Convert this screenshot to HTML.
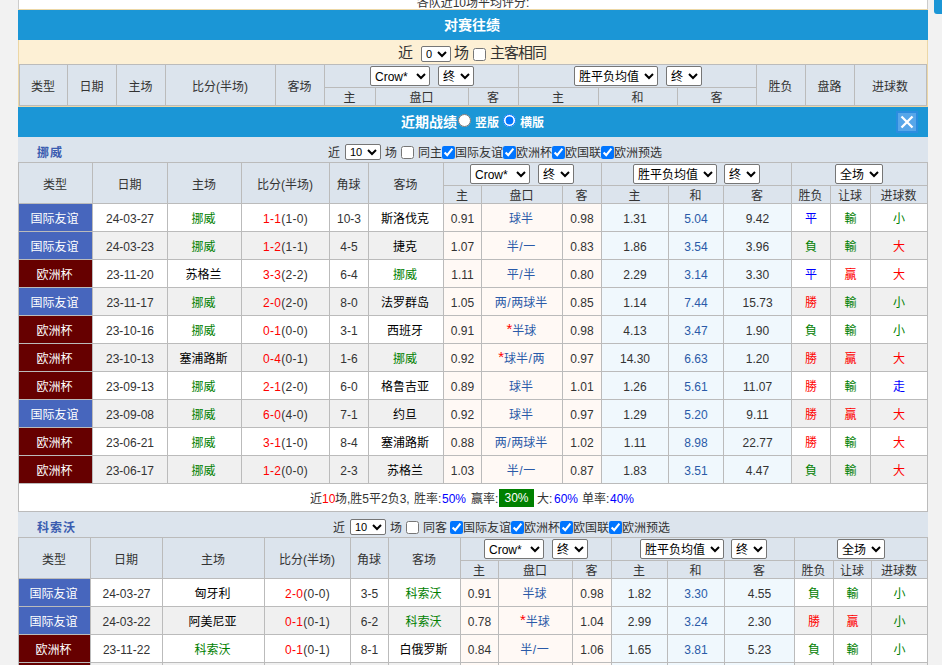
<!DOCTYPE html>
<html lang="zh-CN"><head><meta charset="utf-8"><title>近期战绩</title>
<style>
*{box-sizing:border-box}
html,body{margin:0;padding:0}
body{width:942px;height:665px;overflow:hidden;background:#f2f2f2;font-family:"Liberation Sans","Noto Sans CJK SC",sans-serif;font-size:12px;color:#333;position:relative}
.abs{position:absolute}
#top{left:18px;top:-20px;width:910px;height:29px;background:#fff;border-left:1px solid #ccc;border-right:1px solid #ccc;text-align:center;font-size:12px;line-height:16px;padding-top:15px;color:#333}
.bar{left:18px;width:910px;height:30px;background:#1b96d6;color:#fff;font-weight:bold;font-size:14px}
.bar .t{position:absolute;white-space:nowrap;line-height:16px;height:16px}
#cream{left:18px;top:9px;width:910px;height:98px;background:#fdf0d5;border:1px solid #ecd7a6}
.flow{position:absolute;left:0;top:0;width:0;height:0}
.flow span,.flow select,.flow input{position:absolute;white-space:nowrap}
.flow span{line-height:16px;height:16px}
table{border-collapse:separate;border-spacing:0;table-layout:fixed;position:absolute;border-left:1px solid #bbb;border-top:1px solid #bbb}
td,th{border-right:1px solid #bbb;border-bottom:1px solid #bbb;padding:0;line-height:16px;text-align:center;font-weight:normal;overflow:hidden;white-space:nowrap;vertical-align:middle}
th{background:#dce4ed;color:#333;position:relative;padding-right:1px}
td{padding-top:2px}
th[rowspan]{padding-top:4px}
tr.sb th{padding-top:0}
tr.sb th i{font-style:normal;position:relative;top:1px}
td.c{padding-right:2px}
th select{position:absolute;top:1px}
tr.a td{background:#fff}
tr.b td{background:#f0f0f0}
tr.a td.p,tr.b td.p{background:#fff9f5}
tr.a td.q,tr.b td.q{background:#f0f8fd}
td.fr{background:#4766bd !important;color:#fff}
td.eu{background:#660000 !important;color:#fff}
.g{color:#008000}.r{color:#ff0000}.bl{color:#0000ff}.k{color:#000}
.pk{color:#2a5aa8}
.st{font-size:15px;line-height:0;position:relative;top:-1px;margin-left:.7px}
.sl{margin:0 .5px}
.sc{letter-spacing:.3px}
.dr{color:#2a5aa8}
.team{left:18px;width:910px;height:25px;background:#dce4ed}
.team b{position:absolute;left:19px;top:8px;line-height:16px;color:#3a5cb0;font-size:12px;letter-spacing:1px;white-space:nowrap}
select{font-family:"Liberation Sans","Noto Sans CJK SC",sans-serif;font-size:12px;height:20px;padding:2px 0 0 0;margin:0;color:#000;background-color:#fff;border:1px solid #767676;border-radius:2px}
input{margin:0;width:13px;height:13px}
.sum{left:18px;top:484px;width:910px;height:28px;background:#fff;border:1px solid #bbb;border-top:0;text-align:center;line-height:27px;color:#333;white-space:nowrap}
.flow span.pct{background:#008000;color:#fff;width:35px;height:18px;line-height:18px;text-align:center}
#x{left:896px;top:111px;width:22px;height:22px;background:#57a6e9;border:2px solid #2b8de0}
#fl{left:934px;top:-6px;width:14px;height:20px;background:#1b96d6;border-radius:3px}
</style></head>
<body>
<div id="top" class="abs">各队近10场平均评分:</div>
<div id="cream" class="abs">
<div class="flow" style="font-size:15px"><span style="left:379px;top:35px">近</span><select style="left:402px;top:36px;width:30px;height:16px;padding:0;font-size:11px"><option>0</option></select><span style="left:435px;top:35px">场</span><input type="checkbox" style="left:454px;top:38px"><span style="left:471px;top:35px;letter-spacing:-1px">主客相同</span></div>
<table style="left:0;top:54px;width:908px"><colgroup><col style="width:48px"><col style="width:49px"><col style="width:49px"><col style="width:110px"><col style="width:49px"><col style="width:51px"><col style="width:93px"><col style="width:50px"><col style="width:80px"><col style="width:79px"><col style="width:79px"><col style="width:49px"><col style="width:49px"><col style="width:72px"></colgroup>
<tr style="height:23px"><th rowspan="2">类型</th><th rowspan="2">日期</th><th rowspan="2">主场</th><th rowspan="2">比分(半场)</th><th rowspan="2">客场</th>
<th colspan="3"><select style="left:45px;width:60px;"><option>Crow*</option></select><select style="left:113px;width:36px;"><option>终</option></select></th>
<th colspan="3"><select style="left:55px;width:84px;"><option>胜平负均值</option></select><select style="left:147px;width:36px;"><option>终</option></select></th>
<th rowspan="2">胜负</th><th rowspan="2">盘路</th><th rowspan="2">进球数</th></tr>
<tr class="sb" style="height:18px"><th><i>主</i></th><th><i>盘口</i></th><th><i>客</i></th><th><i>主</i></th><th><i>和</i></th><th><i>客</i></th></tr>
</table>
</div>
<div class="bar abs" style="top:10px"><span class="t" style="left:426px;top:7px">对赛往绩</span></div>
<div class="bar abs" style="top:107px"><div class="flow"><span style="left:383px;top:7px">近期战绩</span><input type="radio" style="left:440px;top:7px"><span style="left:457px;top:8px;font-size:12px">竖版</span><input type="radio" checked style="left:485px;top:7px"><span style="left:502px;top:8px;font-size:12px">横版</span></div></div>
<div id="x" class="abs"><svg width="18" height="18" viewBox="0 0 18 18" style="display:block"><path d="M3.5 3.5 L14.5 14.5 M14.5 3.5 L3.5 14.5" stroke="#fff" stroke-width="2.3" fill="none"/></svg></div>
<div class="team abs" style="top:137px"><b>挪威</b><div class="flow"><span style="left:310px;top:8px">近</span><select style="left:327px;top:7px;width:36px;height:16px;padding:0 0 1px 0;font-size:11px"><option>10</option></select><span style="left:367px;top:8px">场</span><input type="checkbox" style="left:383px;top:9px"><span style="left:400px;top:8px">同主</span><input type="checkbox" checked style="left:424px;top:9px"><span style="left:437px;top:8px">国际友谊</span><input type="checkbox" checked style="left:485px;top:9px"><span style="left:498px;top:8px">欧洲杯</span><input type="checkbox" checked style="left:534px;top:9px"><span style="left:547px;top:8px">欧国联</span><input type="checkbox" checked style="left:583px;top:9px"><span style="left:596px;top:8px">欧洲预选</span></div></div>
<table style="left:18px;top:162px;width:910px"><colgroup><col style="width:74px"><col style="width:75px"><col style="width:74px"><col style="width:88px"><col style="width:39px"><col style="width:75px"><col style="width:38px"><col style="width:81px"><col style="width:39px"><col style="width:67px"><col style="width:55px"><col style="width:68px"><col style="width:39px"><col style="width:40px"><col style="width:57px"></colgroup>
<tr style="height:23px"><th rowspan="2">类型</th><th rowspan="2">日期</th><th rowspan="2">主场</th><th rowspan="2">比分(半场)</th><th rowspan="2">角球</th><th rowspan="2">客场</th>
<th colspan="3"><select style="left:26px;width:60px;"><option>Crow*</option></select><select style="left:94px;width:36px;"><option>终</option></select></th>
<th colspan="3"><select style="left:31px;width:84px;"><option>胜平负均值</option></select><select style="left:122px;width:36px;"><option>终</option></select></th>
<th colspan="3"><select style="left:43px;width:48px;"><option>全场</option></select></th></tr>
<tr class="sb" style="height:18px"><th><i>主</i></th><th><i>盘口</i></th><th><i>客</i></th><th><i>主</i></th><th><i>和</i></th><th><i>客</i></th><th><i>胜负</i></th><th><i>让球</i></th><th><i>进球数</i></th></tr>
<tr class="a" style="height:28px"><td class="fr c">国际友谊</td><td>24-03-27</td><td class="g c">挪威</td><td class="sc"><span class="r">1-1</span>(1-0)</td><td>10-3</td><td class="k c">斯洛伐克</td><td class="p">0.91</td><td class="p pk c">球半</td><td class="p">0.98</td><td class="q">1.31</td><td class="q dr">5.04</td><td class="q">9.42</td><td class="bl">平</td><td class="g">輸</td><td class="g">小</td></tr><tr class="b" style="height:28px"><td class="fr c">国际友谊</td><td>24-03-23</td><td class="g c">挪威</td><td class="sc"><span class="r">1-2</span>(1-1)</td><td>4-5</td><td class="k c">捷克</td><td class="p">1.07</td><td class="p pk c">半<span class="sl">/</span>一</td><td class="p">0.83</td><td class="q">1.86</td><td class="q dr">3.54</td><td class="q">3.96</td><td class="g">負</td><td class="g">輸</td><td class="r">大</td></tr><tr class="a" style="height:28px"><td class="eu c">欧洲杯</td><td>23-11-20</td><td class="k c">苏格兰</td><td class="sc"><span class="r">3-3</span>(2-2)</td><td>6-4</td><td class="g c">挪威</td><td class="p">1.11</td><td class="p pk c">平<span class="sl">/</span>半</td><td class="p">0.80</td><td class="q">2.29</td><td class="q dr">3.14</td><td class="q">3.30</td><td class="bl">平</td><td class="r">贏</td><td class="r">大</td></tr><tr class="b" style="height:28px"><td class="fr c">国际友谊</td><td>23-11-17</td><td class="g c">挪威</td><td class="sc"><span class="r">2-0</span>(2-0)</td><td>8-0</td><td class="k c">法罗群岛</td><td class="p">1.05</td><td class="p pk c">两<span class="sl">/</span>两球半</td><td class="p">0.85</td><td class="q">1.14</td><td class="q dr">7.44</td><td class="q">15.73</td><td class="r">勝</td><td class="g">輸</td><td class="g">小</td></tr><tr class="a" style="height:28px"><td class="eu c">欧洲杯</td><td>23-10-16</td><td class="g c">挪威</td><td class="sc"><span class="r">0-1</span>(0-0)</td><td>3-1</td><td class="k c">西班牙</td><td class="p">0.91</td><td class="p pk c"><span class="r st">*</span>半球</td><td class="p">0.98</td><td class="q">4.13</td><td class="q dr">3.47</td><td class="q">1.90</td><td class="g">負</td><td class="g">輸</td><td class="g">小</td></tr><tr class="b" style="height:28px"><td class="eu c">欧洲杯</td><td>23-10-13</td><td class="k c">塞浦路斯</td><td class="sc"><span class="r">0-4</span>(0-1)</td><td>1-6</td><td class="g c">挪威</td><td class="p">0.92</td><td class="p pk c"><span class="r st">*</span>球半<span class="sl">/</span>两</td><td class="p">0.97</td><td class="q">14.30</td><td class="q dr">6.63</td><td class="q">1.20</td><td class="r">勝</td><td class="r">贏</td><td class="r">大</td></tr><tr class="a" style="height:28px"><td class="eu c">欧洲杯</td><td>23-09-13</td><td class="g c">挪威</td><td class="sc"><span class="r">2-1</span>(2-0)</td><td>6-0</td><td class="k c">格鲁吉亚</td><td class="p">0.89</td><td class="p pk c">球半</td><td class="p">1.01</td><td class="q">1.26</td><td class="q dr">5.61</td><td class="q">11.07</td><td class="r">勝</td><td class="g">輸</td><td class="bl">走</td></tr><tr class="b" style="height:28px"><td class="fr c">国际友谊</td><td>23-09-08</td><td class="g c">挪威</td><td class="sc"><span class="r">6-0</span>(4-0)</td><td>7-1</td><td class="k c">约旦</td><td class="p">0.92</td><td class="p pk c">球半</td><td class="p">0.97</td><td class="q">1.29</td><td class="q dr">5.20</td><td class="q">9.11</td><td class="r">勝</td><td class="r">贏</td><td class="r">大</td></tr><tr class="a" style="height:28px"><td class="eu c">欧洲杯</td><td>23-06-21</td><td class="g c">挪威</td><td class="sc"><span class="r">3-1</span>(1-0)</td><td>8-4</td><td class="k c">塞浦路斯</td><td class="p">0.88</td><td class="p pk c">两<span class="sl">/</span>两球半</td><td class="p">1.02</td><td class="q">1.11</td><td class="q dr">8.98</td><td class="q">22.77</td><td class="r">勝</td><td class="g">輸</td><td class="r">大</td></tr><tr class="b" style="height:28px"><td class="eu c">欧洲杯</td><td>23-06-17</td><td class="g c">挪威</td><td class="sc"><span class="r">1-2</span>(0-0)</td><td>2-3</td><td class="k c">苏格兰</td><td class="p">1.03</td><td class="p pk c">半<span class="sl">/</span>一</td><td class="p">0.87</td><td class="q">1.83</td><td class="q dr">3.51</td><td class="q">4.47</td><td class="g">負</td><td class="g">輸</td><td class="r">大</td></tr>
</table>
<div class="sum abs"><div class="flow"><span style="left:291px;top:7px">近</span><span class="r" style="left:303px;top:7px">10</span><span style="left:316px;top:7px">场,胜5平2负3,</span><span style="left:395px;top:7px">胜率:</span><span class="bl" style="left:423px;top:7px">50%</span><span style="left:452px;top:7px">赢率:</span><span class="pct" style="left:480px;top:5px">30%</span><span style="left:518px;top:7px">大:</span><span class="bl" style="left:535px;top:7px">60%</span><span style="left:563px;top:7px">单率:</span><span class="bl" style="left:591px;top:7px">40%</span></div></div>
<div class="team abs" style="top:512px"><b>科索沃</b><div class="flow"><span style="left:315px;top:8px">近</span><select style="left:332px;top:7px;width:36px;height:16px;padding:0 0 1px 0;font-size:11px"><option>10</option></select><span style="left:372px;top:8px">场</span><input type="checkbox" style="left:388px;top:9px"><span style="left:405px;top:8px">同客</span><input type="checkbox" checked style="left:432px;top:9px"><span style="left:445px;top:8px">国际友谊</span><input type="checkbox" checked style="left:493px;top:9px"><span style="left:506px;top:8px">欧洲杯</span><input type="checkbox" checked style="left:542px;top:9px"><span style="left:555px;top:8px">欧国联</span><input type="checkbox" checked style="left:591px;top:9px"><span style="left:604px;top:8px">欧洲预选</span></div></div>
<table style="left:18px;top:537px;width:910px"><colgroup><col style="width:72px"><col style="width:72px"><col style="width:102px"><col style="width:86px"><col style="width:38px"><col style="width:72px"><col style="width:38px"><col style="width:74px"><col style="width:39px"><col style="width:56px"><col style="width:57px"><col style="width:70px"><col style="width:39px"><col style="width:38px"><col style="width:56px"></colgroup>
<tr style="height:23px"><th rowspan="2">类型</th><th rowspan="2">日期</th><th rowspan="2">主场</th><th rowspan="2">比分(半场)</th><th rowspan="2">角球</th><th rowspan="2">客场</th>
<th colspan="3"><select style="left:23px;width:60px;"><option>Crow*</option></select><select style="left:91px;width:36px;"><option>终</option></select></th>
<th colspan="3"><select style="left:28px;width:84px;"><option>胜平负均值</option></select><select style="left:119px;width:36px;"><option>终</option></select></th>
<th colspan="3"><select style="left:42px;width:48px;"><option>全场</option></select></th></tr>
<tr class="sb" style="height:18px"><th><i>主</i></th><th><i>盘口</i></th><th><i>客</i></th><th><i>主</i></th><th><i>和</i></th><th><i>客</i></th><th><i>胜负</i></th><th><i>让球</i></th><th><i>进球数</i></th></tr>
<tr class="a" style="height:28px"><td class="fr c">国际友谊</td><td>24-03-27</td><td class="k c">匈牙利</td><td class="sc"><span class="r">2-0</span>(0-0)</td><td>3-5</td><td class="g c">科索沃</td><td class="p">0.91</td><td class="p pk c">半球</td><td class="p">0.98</td><td class="q">1.82</td><td class="q dr">3.30</td><td class="q">4.55</td><td class="g">負</td><td class="g">輸</td><td class="g">小</td></tr><tr class="b" style="height:28px"><td class="fr c">国际友谊</td><td>24-03-22</td><td class="k c">阿美尼亚</td><td class="sc"><span class="r">0-1</span>(0-1)</td><td>6-2</td><td class="g c">科索沃</td><td class="p">0.78</td><td class="p pk c"><span class="r st">*</span>半球</td><td class="p">1.04</td><td class="q">2.99</td><td class="q dr">3.24</td><td class="q">2.30</td><td class="r">勝</td><td class="r">贏</td><td class="g">小</td></tr><tr class="a" style="height:28px"><td class="eu c">欧洲杯</td><td>23-11-22</td><td class="g c">科索沃</td><td class="sc"><span class="r">0-1</span>(0-1)</td><td>8-1</td><td class="k c">白俄罗斯</td><td class="p">0.84</td><td class="p pk c">半<span class="sl">/</span>一</td><td class="p">1.06</td><td class="q">1.65</td><td class="q dr">3.81</td><td class="q">5.23</td><td class="g">負</td><td class="g">輸</td><td class="g">小</td></tr><tr class="b" style="height:28px"><td class="eu c">欧洲杯</td><td>23-11-19</td><td class="g c">科索沃</td><td class="sc"><span class="r">1-0</span>(0-0)</td><td>5-2</td><td class="k c">以色列</td><td class="p">0.95</td><td class="p pk c">平<span class="sl">/</span>半</td><td class="p">0.93</td><td class="q">2.25</td><td class="q dr">3.20</td><td class="q">3.25</td><td class="r">勝</td><td class="r">贏</td><td class="g">小</td></tr>
</table>
<div id="fl" class="abs"></div>
</body></html>
